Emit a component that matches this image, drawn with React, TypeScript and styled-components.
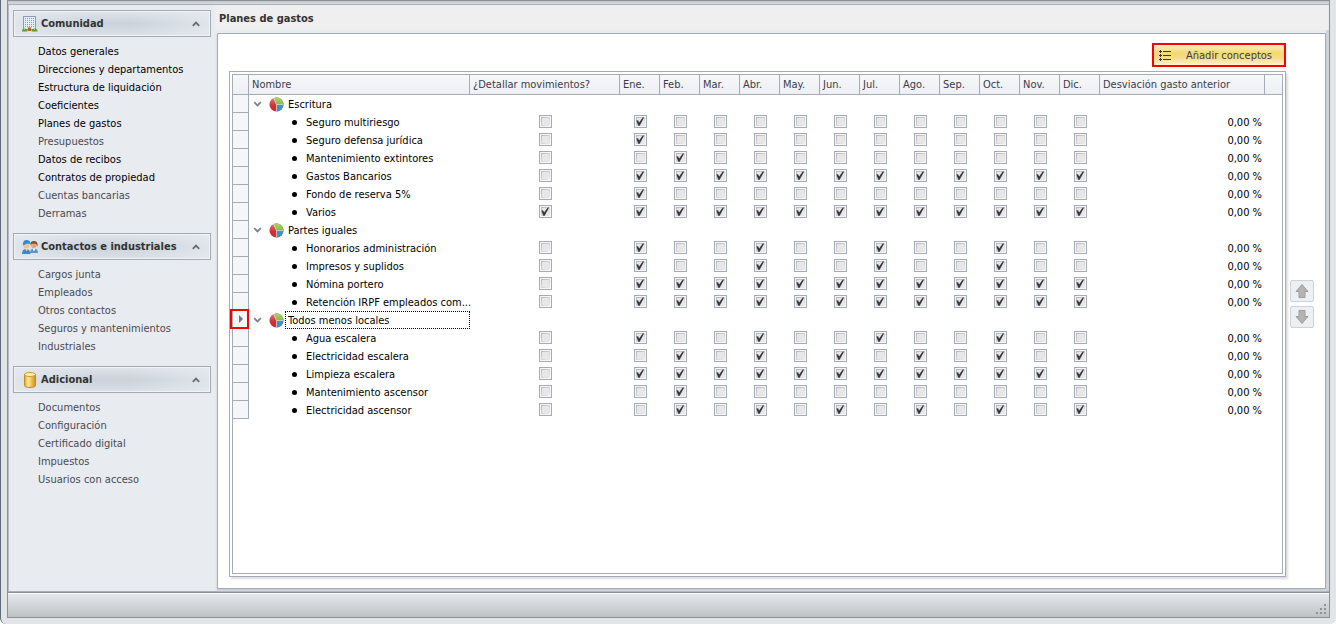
import React from 'react';
import styled, { createGlobalStyle, css } from 'styled-components';

const LINE = '#a5acb8';
const INK = '#3c3c46';

const GlobalStyle = createGlobalStyle`
  *, *::before, *::after { box-sizing: border-box; }
  body {
    margin: 0;
    background: #fff;
    font-family: 'DejaVu Sans Condensed', Tahoma, 'DejaVu Sans', sans-serif;
    font-size: 11px;
    line-height: 18px;
    color: #000;
  }
  button { font: inherit; color: inherit; }
`;

const Window = styled.div`
  min-height: 100vh;
  display: flex;
  flex-direction: column;
  padding: 0 6px 6px;
  background: #e1e5e8;
  border-left: 1px solid #5f6875;
  border-radius: 0 0 6px 6px;
`;

const Frame = styled.div`
  flex: 1;
  display: flex;
  flex-direction: column;
  border: 1px solid #8b8f96;
`;

const TopEdge = styled.div`
  height: 4px;
  background: linear-gradient(#c3c5cc, #d8dbe0);
  border-bottom: 1px solid #a9afb9;
`;

const Workspace = styled.div`
  flex: 1;
  display: flex;
  background: #e8ebf0;
  border-left: 1px solid #b5bbc5;
  border-bottom: 1px solid #a8afba;
`;

const Sidebar = styled.nav`
  flex: none;
  width: 206px;
  display: flex;
  flex-direction: column;
  gap: 10px;
  padding: 5px 4px;
`;

const GroupHeader = styled.button`
  width: 100%;
  height: 27px;
  display: flex;
  align-items: center;
  gap: 3px;
  padding: 0 10px 0 8px;
  border: 1px solid #a2aab4;
  box-shadow: inset 0 0 0 1px #f1f4f7;
  background: linear-gradient(90deg, rgba(232, 236, 241, 0.7), rgba(232, 236, 241, 0) 40%, rgba(232, 236, 241, 0) 60%, rgba(232, 236, 241, 0.7)),
    linear-gradient(#e0e4ea, #cad2db 50%, #dbe0e6);
  color: #333;
  font-weight: bold;
  line-height: 20px;
  text-align: left;
`;

const GroupTitle = styled.span`
  flex: 1;
  padding-top: 1px;
  white-space: nowrap;
`;

const ItemList = styled.ul`
  list-style: none;
  margin: 6px 0 0;
  padding: 0 0 0 25px;
`;

const ItemLink = styled.a<{ $dim?: boolean }>`
  display: block;
  color: ${(p) => (p.$dim ? '#4a4a50' : '#000')};
  text-decoration: none;
  white-space: nowrap;
`;

const Main = styled.main`
  flex: 1;
  min-width: 0;
  display: flex;
  flex-direction: column;
`;

const Title = styled.h1`
  margin: 0 1px 0 0;
  height: 25px;
  padding: 0 4px;
  background: #efefef;
  color: #333;
  font-size: 11px;
  line-height: 28px;
`;

const PanelArea = styled.div`
  flex: 1;
  display: flex;
  padding: 3px 3px 2px 2px;
  background: linear-gradient(90deg, rgba(0, 0, 0, 0) calc(100% - 3px), #cfd4da calc(100% - 3px));
`;

const Panel = styled.section`
  flex: 1;
  min-width: 0;
  display: flex;
  gap: 4px;
  padding: 9px 11px 11px;
  background: #fff;
  border: 1px solid ${LINE};
  box-shadow: 0 2px 2px #c6cbd2;
`;

const PanelBody = styled.div`
  flex: 1;
  min-width: 0;
  display: flex;
  flex-direction: column;
  gap: 4px;
`;

const AddButton = styled.button`
  align-self: flex-end;
  width: 134px;
  height: 24px;
  display: flex;
  align-items: center;
  gap: 14px;
  padding: 2px 0 0 5px;
  border: 2px solid #fb0000;
  background: linear-gradient(#fcf0c4, #f3d878 40%, #f6dc82 65%, #fdf3cd);
  color: ${INK};
  white-space: nowrap;
`;

const GridFrame = styled.div`
  flex: 1;
  display: flex;
  padding: 2px;
  border: 1px solid ${LINE};
  box-shadow: 2px 2px 2px #dcdcdc;
`;

const GridInner = styled.div`
  flex: 1;
  min-width: 0;
  border: 1px solid ${LINE};
`;

const Table = styled.table`
  width: 100%;
  table-layout: fixed;
  border-collapse: separate;
  border-spacing: 0;
`;

const Col = styled.col<{ $w?: number }>`
  ${(p) => p.$w && css`width: ${p.$w}px;`}
`;

const HeadCell = styled.th<{ $last?: boolean }>`
  height: 20px;
  padding: 0 0 0 3px;
  border-bottom: 1px solid ${LINE};
  border-right: ${(p) => (p.$last ? 'none' : `1px solid ${LINE}`)};
  background: linear-gradient(#f7f8fa, #eceff4);
  color: ${INK};
  font-weight: normal;
  text-align: left;
  white-space: nowrap;
`;

const Cell = styled.td`
  height: 18px;
  padding: 0;
`;

const IndicatorCell = styled(Cell)`
  position: relative;
  border-right: 1px solid ${LINE};
  border-bottom: 1px solid ${LINE};
  background: #f4f6f9;
`;

const CurrentMark = styled.span`
  position: absolute;
  left: -3px;
  top: -2px;
  width: 19px;
  height: 20px;
  display: flex;
  align-items: center;
  justify-content: center;
  padding-left: 2px;
  border: 2px solid #fb0000;
`;

const CheckCell = styled(Cell)`
  padding-bottom: 1px;
`;

const PercentCell = styled(Cell)`
  padding: 2px 3px 0 0;
  line-height: 16px;
  text-align: right;
`;

const NameLine = styled.div<{ $child?: boolean }>`
  height: 18px;
  display: flex;
  align-items: center;
  gap: ${(p) => (p.$child ? 6 : 1)}px;
  padding-left: ${(p) => (p.$child ? 43 : 4)}px;
`;

const Bullet = styled.span`
  flex: none;
  width: 5px;
  height: 5px;
  border-radius: 50%;
  background: #000;
`;

const Expander = styled.button`
  width: 15px;
  height: 16px;
  display: flex;
  align-items: center;
  padding: 0;
  border: none;
  background: none;
`;

const Label = styled.span<{ $focused?: boolean }>`
  flex: 1;
  min-width: 0;
  height: 18px;
  padding: 0 2px;
  border: 1px dotted ${(p) => (p.$focused ? '#000' : 'transparent')};
  line-height: 18px;
  white-space: nowrap;
`;

const Tick = styled.input`
  appearance: none;
  display: block;
  position: relative;
  width: 13px;
  height: 13px;
  margin: 0 auto;
  border: 1px solid ${LINE};
  background: linear-gradient(#e8e6e6, #e8e6e6) center / 7px 7px no-repeat,
    linear-gradient(135deg, #b4b4b4, #f0f0f0) center / 9px 9px no-repeat, #f6f6f6;
  &:checked::after {
    content: '';
    position: absolute;
    inset: 1px;
    background: #36383b;
    clip-path: polygon(10% 40%, 28% 36%, 40% 62%, 80% 6%, 96% 6%, 46% 96%, 30% 96%);
  }
`;

const MoveButtons = styled.div`
  flex: none;
  width: 24px;
  display: flex;
  flex-direction: column;
  justify-content: center;
  gap: 4px;
  padding-bottom: 12px;
`;

const MoveButton = styled.button`
  height: 22px;
  display: flex;
  align-items: center;
  justify-content: center;
  padding: 0;
  border: 1px solid #cdd2d8;
  border-radius: 2px;
  background: #edf0f3;
`;

const StatusBar = styled.footer`
  height: 24px;
  display: flex;
  align-items: flex-end;
  justify-content: flex-end;
  padding: 3px;
  border-top: 1px solid #fff;
  box-shadow: 0 -1px 0 #8b9099;
  margin-top: 1px;
  background: linear-gradient(#e4e8ed, #bfc2c5);
`;

const CommunityIcon = () => (
  <svg width="16" height="16" viewBox="0 0 16 16" aria-hidden="true">
    <rect x="1.5" y=".5" width="12" height="13" fill="#e2eefb" stroke="#8a9cb4" />
    {[2, 4, 6, 8, 10].map((y) => (
      <path key={y} d={`M3 ${y + 0.5}h9`} stroke="#7d9cc4" strokeDasharray="1 1" />
    ))}
    <path d="M6 11h3v4H6z" fill="#a9622c" />
    <path d="M5.500 11.500h4" stroke="#e0a458" />
    <path d="M0 15.500q0-3 3-3 2.500 0 2.500 3zM9.500 15.500q0-3 3-3t3 3z" fill="#5f9a2e" />
    <path d="M2 13.500h1M12 13.500h1" stroke="#a5cf5c" />
  </svg>
);

const ContactsIcon = () => (
  <svg width="16" height="16" viewBox="0 0 16 16" aria-hidden="true">
    <path d="M8 14q0-4.500 4-4.500t4 4.500z" fill="#5a96c8" />
    <path d="M10.500 9.500l1.500 3 1.500-3z" fill="#fff" />
    <circle cx="11.800" cy="6" r="3" fill="#e3a878" />
    <path d="M8.500 6Q8 2 12 2q4.200 0 3.500 5.500L14 4.800H10z" fill="#85502d" />
    <path d="M0 15q0-5 4-5t4.500 5z" fill="#3f86c5" />
    <path d="M3 10l1.500 2.500L6 10z" fill="#f0c8a0" />
    <circle cx="4.500" cy="6.500" r="3" fill="#f0c29a" />
    <path d="M1 6.500Q.5 1 4.500 1t4 4L5 4.500z" fill="#2f8bd0" />
  </svg>
);

const DatabaseIcon = () => (
  <svg width="16" height="16" viewBox="0 0 16 16" aria-hidden="true">
    <defs>
      <linearGradient id="gold" x1="0" x2="1">
        <stop offset="0" stopColor="#e9a92a" />
        <stop offset=".35" stopColor="#ffe794" />
        <stop offset="1" stopColor="#d68c12" />
      </linearGradient>
    </defs>
    <path d="M2.500 2.500v11c0 1.300 2.500 2 5.500 2s5.500-.7 5.500-2v-11z" fill="url(#gold)" stroke="#c58a1c" />
    <ellipse cx="8" cy="2.500" rx="5.500" ry="2" fill="#fff0b5" stroke="#cf9a35" />
  </svg>
);

const ChevronUp = () => (
  <svg width="8" height="6" viewBox="0 0 8 6" aria-hidden="true">
    <path d="M.8 4.800L4 1.600l3.200 3.200" fill="none" stroke="#666a72" strokeWidth="1.800" />
  </svg>
);

const ChevronDown = () => (
  <svg width="9" height="6" viewBox="0 0 9 6" aria-hidden="true">
    <path d="M1.200 1.200l3.300 3.200 3.300-3.200" fill="none" stroke="#7d818a" strokeWidth="1.800" />
  </svg>
);

const PieIcon = () => (
  <svg width="15" height="15" viewBox="0 0 15 15" aria-hidden="true">
    <defs>
      <linearGradient id="pieGloss" x1="0" y1="0" x2="0" y2="1">
        <stop offset="0" stopColor="#fff" stopOpacity=".35" />
        <stop offset=".6" stopColor="#fff" stopOpacity="0" />
      </linearGradient>
    </defs>
    <circle cx="7.500" cy="7.500" r="7" fill="#cf2f2f" />
    <path d="M7.500 7.500L4.500 1.200A7 7 0 0 1 14.500 7.500z" fill="#7fb82e" />
    <path d="M7.500 7.500H14.500A7 7 0 0 1 7.500 14.500z" fill="#3d93c8" />
    <path d="M4.500 1.200l3 6.300V14.500M7.500 7.500h7" fill="none" stroke="#f2f2f2" strokeWidth=".6" />
    <circle cx="7.500" cy="7.500" r="7" fill="url(#pieGloss)" />
  </svg>
);

const ListIcon = () => (
  <svg width="13" height="12" viewBox="0 0 13 12" aria-hidden="true">
    <path d="M4 1.500h8M4 5.500h8M4 9.500h8" stroke="#3a3a3a" />
    <path d="M0 1.500h3M0 5.500h3M0 9.500h3" stroke="#3a3a3a" />
    <path d="M1.500 0v3M1.500 4v3M1.500 8v3" stroke="#3a3a3a" />
  </svg>
);

const ArrowIcon = ({ down }: { down?: boolean }) => (
  <svg width="14" height="14" viewBox="0 0 14 14" aria-hidden="true">
    <path
      d={down ? 'M4 .5h6v6h3L7 13.500 1 6.500h3z' : 'M4 13.500h6v-6h3L7 .5 1 7.500h3z'}
      fill="#b4b4b4"
      stroke="#9c9c9c"
      strokeLinejoin="round"
    />
  </svg>
);

const RowArrow = () => (
  <svg width="4" height="8" viewBox="0 0 4 8" aria-hidden="true">
    <path d="M0 0l4 4-4 4z" fill="#70757e" />
  </svg>
);

const GripIcon = () => (
  <svg width="10" height="10" viewBox="0 0 10 10" aria-hidden="true">
    {[[8, 0], [4, 4], [8, 4], [0, 8], [4, 8], [8, 8]].map(([x, y]) => (
      <rect key={`${x}-${y}`} x={x} y={y} width="2" height="2" fill="#8e9297" />
    ))}
  </svg>
);

const GROUPS = [
  {
    title: 'Comunidad',
    Icon: CommunityIcon,
    items: [
      ['Datos generales'],
      ['Direcciones y departamentos'],
      ['Estructura de liquidación'],
      ['Coeficientes'],
      ['Planes de gastos'],
      ['Presupuestos', true],
      ['Datos de recibos'],
      ['Contratos de propiedad'],
      ['Cuentas bancarias', true],
      ['Derramas', true],
    ] as [string, boolean?][],
  },
  {
    title: 'Contactos e industriales',
    Icon: ContactsIcon,
    items: [
      ['Cargos junta', true],
      ['Empleados', true],
      ['Otros contactos', true],
      ['Seguros y mantenimientos', true],
      ['Industriales', true],
    ] as [string, boolean?][],
  },
  {
    title: 'Adicional',
    Icon: DatabaseIcon,
    items: [
      ['Documentos', true],
      ['Configuración', true],
      ['Certificado digital', true],
      ['Impuestos', true],
      ['Usuarios con acceso', true],
    ] as [string, boolean?][],
  },
];

const MONTHS = ['Ene.', 'Feb.', 'Mar.', 'Abr.', 'May.', 'Jun.', 'Jul.', 'Ago.', 'Sep.', 'Oct.', 'Nov.', 'Dic.'];
const ALL = [0, 1, 2, 3, 4, 5, 6, 7, 8, 9, 10, 11];
const QUARTERLY = [0, 3, 6, 9];
const BIMONTHLY = [1, 3, 5, 7, 9, 11];

interface Concept {
  name: string;
  months: number[];
  detail?: boolean;
}

const PLANS: { name: string; current?: boolean; concepts: Concept[] }[] = [
  {
    name: 'Escritura',
    concepts: [
      { name: 'Seguro multiriesgo', months: [0] },
      { name: 'Seguro defensa jurídica', months: [0] },
      { name: 'Mantenimiento extintores', months: [1] },
      { name: 'Gastos Bancarios', months: ALL },
      { name: 'Fondo de reserva 5%', months: [0] },
      { name: 'Varios', months: ALL, detail: true },
    ],
  },
  {
    name: 'Partes iguales',
    concepts: [
      { name: 'Honorarios administración', months: QUARTERLY },
      { name: 'Impresos y suplidos', months: QUARTERLY },
      { name: 'Nómina portero', months: ALL },
      { name: 'Retención IRPF empleados com...', months: ALL },
    ],
  },
  {
    name: 'Todos menos locales',
    current: true,
    concepts: [
      { name: 'Agua escalera', months: QUARTERLY },
      { name: 'Electricidad escalera', months: BIMONTHLY },
      { name: 'Limpieza escalera', months: ALL },
      { name: 'Mantenimiento ascensor', months: [1] },
      { name: 'Electricidad ascensor', months: BIMONTHLY },
    ],
  },
];

const ConceptRow = ({ concept }: { concept: Concept }) => (
  <tr>
    <IndicatorCell />
    <Cell>
      <NameLine $child>
        <Bullet />
        <Label>{concept.name}</Label>
      </NameLine>
    </Cell>
    <CheckCell>
      <Tick type="checkbox" defaultChecked={concept.detail} aria-label={`${concept.name}: detallar movimientos`} />
    </CheckCell>
    {MONTHS.map((month, i) => (
      <CheckCell key={month}>
        <Tick type="checkbox" defaultChecked={concept.months.includes(i)} aria-label={`${concept.name}: ${month}`} />
      </CheckCell>
    ))}
    <PercentCell>0,00 %</PercentCell>
    <Cell />
  </tr>
);

export default function App() {
  return (
    <>
      <GlobalStyle />
      <Window>
        <Frame>
          <TopEdge />
          <Workspace>
            <Sidebar>
              {GROUPS.map(({ title, Icon, items }) => (
                <div key={title}>
                  <GroupHeader type="button" aria-expanded="true">
                    <Icon />
                    <GroupTitle>{title}</GroupTitle>
                    <ChevronUp />
                  </GroupHeader>
                  <ItemList>
                    {items.map(([text, dim]) => (
                      <li key={text}>
                        <ItemLink href="#" $dim={dim}>
                          {text}
                        </ItemLink>
                      </li>
                    ))}
                  </ItemList>
                </div>
              ))}
            </Sidebar>
            <Main>
              <Title>Planes de gastos</Title>
              <PanelArea>
                <Panel>
                  <PanelBody>
                    <AddButton type="button">
                      <ListIcon />
                      Añadir conceptos
                    </AddButton>
                    <GridFrame>
                      <GridInner>
                        <Table>
                          <colgroup>
                            <Col $w={16} />
                            <Col $w={221} />
                            <Col $w={150} />
                            {MONTHS.map((month) => (
                              <Col key={month} $w={40} />
                            ))}
                            <Col />
                            <Col $w={17} />
                          </colgroup>
                          <thead>
                            <tr>
                              <HeadCell />
                              <HeadCell>Nombre</HeadCell>
                              <HeadCell>¿Detallar movimientos?</HeadCell>
                              {MONTHS.map((month) => (
                                <HeadCell key={month}>{month}</HeadCell>
                              ))}
                              <HeadCell>Desviación gasto anterior</HeadCell>
                              <HeadCell $last />
                            </tr>
                          </thead>
                          <tbody>
                            {PLANS.map((plan) => (
                              <React.Fragment key={plan.name}>
                                <tr>
                                  <IndicatorCell>
                                    {plan.current && (
                                      <CurrentMark>
                                        <RowArrow />
                                      </CurrentMark>
                                    )}
                                  </IndicatorCell>
                                  <Cell>
                                    <NameLine>
                                      <Expander type="button" aria-label={`Contraer ${plan.name}`}>
                                        <ChevronDown />
                                      </Expander>
                                      <PieIcon />
                                      <Label $focused={plan.current}>{plan.name}</Label>
                                    </NameLine>
                                  </Cell>
                                  <Cell colSpan={15} />
                                </tr>
                                {plan.concepts.map((concept) => (
                                  <ConceptRow key={concept.name} concept={concept} />
                                ))}
                              </React.Fragment>
                            ))}
                          </tbody>
                        </Table>
                      </GridInner>
                    </GridFrame>
                  </PanelBody>
                  <MoveButtons>
                    <MoveButton type="button" aria-label="Subir">
                      <ArrowIcon />
                    </MoveButton>
                    <MoveButton type="button" aria-label="Bajar">
                      <ArrowIcon down />
                    </MoveButton>
                  </MoveButtons>
                </Panel>
              </PanelArea>
            </Main>
          </Workspace>
          <StatusBar>
            <GripIcon />
          </StatusBar>
        </Frame>
      </Window>
    </>
  );
}
